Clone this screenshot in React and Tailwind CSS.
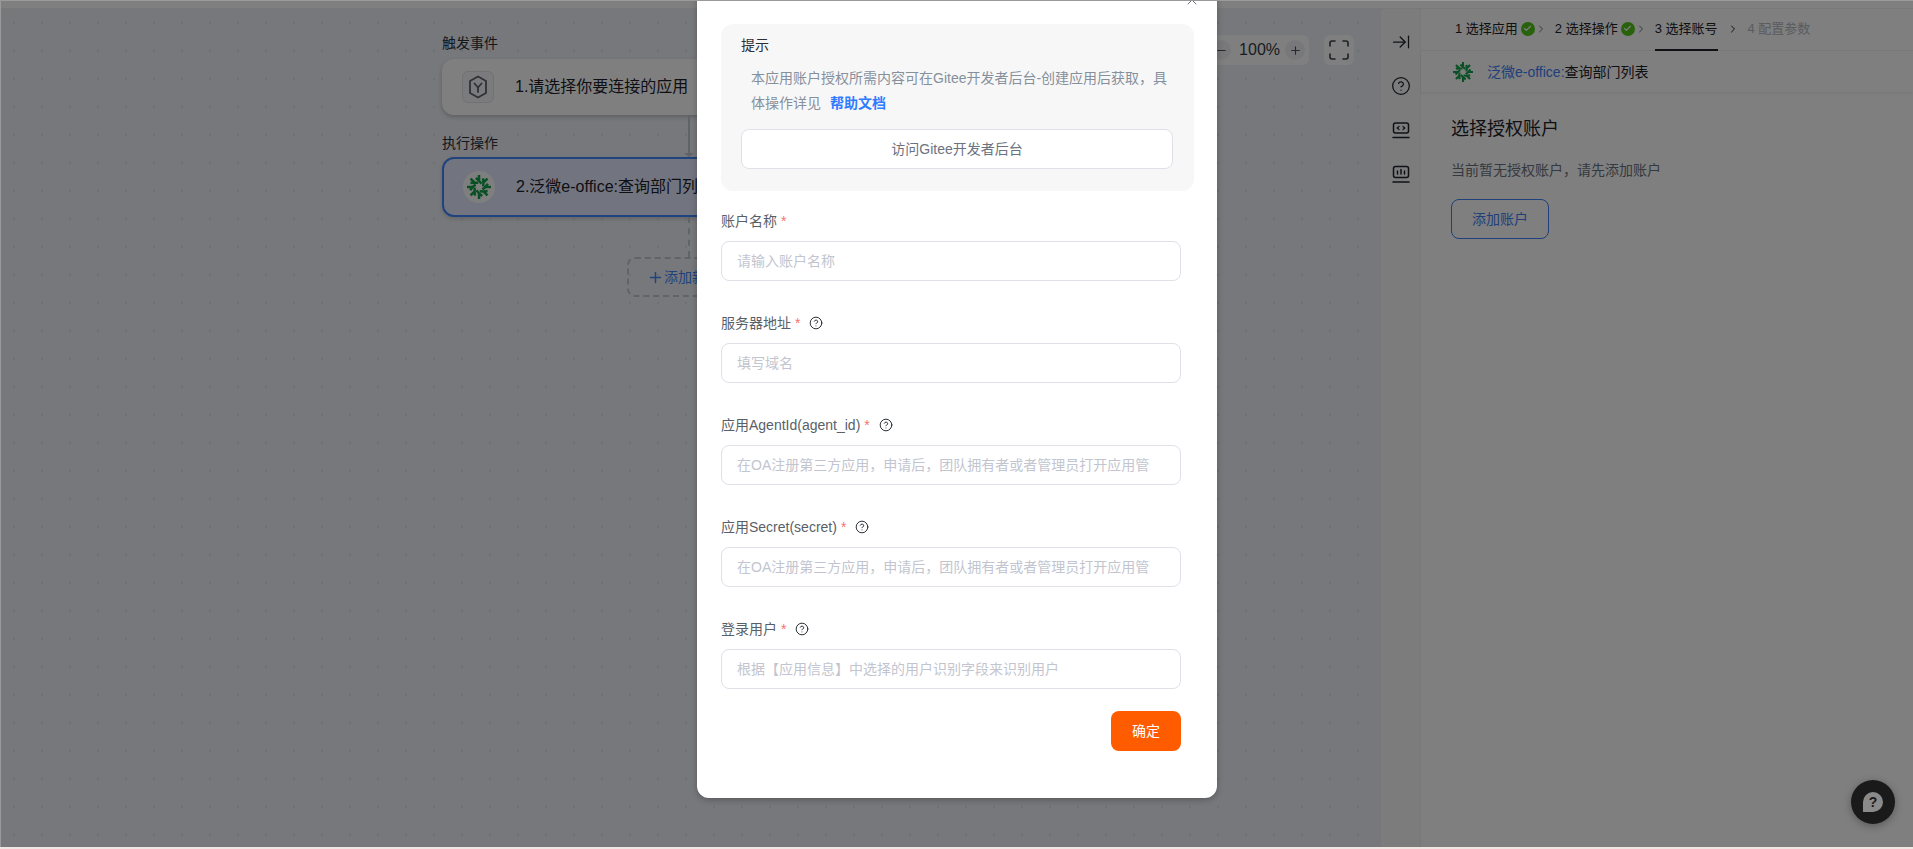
import React from "react";
import { ArrowRightToLine, CircleHelp, X, Plus, Minus, ChevronRight, Check } from "lucide-react";

const font = "font-['Liberation_Sans','Noto_Sans_CJK_SC',sans-serif]";

function Burst({ size = 24 }) {
  const arms = [0, 45, 90, 135, 180, 225, 270, 315];
  return (
    <svg width={size} height={size} viewBox="1.5 1.5 21 21" fill="none">
      {arms.map((a) => (
        <path key={a} transform={`rotate(${a} 12 12)`} d="M12 1.5 L12 6.5 L9.2 4.2 M12 6.5 L14.2 9" stroke="#14a04a" strokeWidth="2.2" strokeLinecap="butt" strokeLinejoin="miter" />
      ))}
    </svg>
  );
}

function HexIcon() {
  return (
    <svg width="20" height="24" viewBox="0 0 20 24" fill="none" stroke="#5c6270" strokeWidth="1.8" strokeLinejoin="round">
      <path d="M10 1.5 L18 6 V18 L10 22.5 L2 18 V6 Z" />
      <path d="M6.5 8.5 L10 12.5 L13.5 8.5 M10 12.5 V17" strokeLinecap="round" />
    </svg>
  );
}

function CodeIcon() {
  return (
    <svg width="18" height="20" viewBox="0 0 18 20" fill="none" stroke="#1f2329" strokeWidth="1.5" strokeLinecap="round">
      <rect x="1.5" y="3" width="15" height="10" rx="2" />
      <path d="M7 6.5 L5.2 8 L7 9.5 M11 6.5 L12.8 8 L11 9.5" strokeWidth="1.2" />
      <path d="M1 17.5 H17" />
    </svg>
  );
}

function ChartIcon() {
  return (
    <svg width="18" height="20" viewBox="0 0 18 20" fill="none" stroke="#1f2329" strokeWidth="1.5" strokeLinecap="round">
      <rect x="1.5" y="2.5" width="15" height="11" rx="2" />
      <path d="M5.5 7 V10 M9 5.5 V10 M12.5 7 V10" />
      <path d="M1 18 H17" />
    </svg>
  );
}

function FullscreenIcon() {
  return (
    <svg width="20" height="20" viewBox="0 0 20 20" fill="none" stroke="#3a3f4a" strokeWidth="1.6" strokeLinecap="round">
      <path d="M1 6 V3 Q1 1 3 1 H6 M14 1 H17 Q19 1 19 3 V6 M19 14 V17 Q19 19 17 19 H14 M6 19 H3 Q1 19 1 17 V14" />
    </svg>
  );
}

function StepCheck() {
  return (
    <span className="flex h-[14px] w-[14px] items-center justify-center rounded-full bg-[#52c41a]">
      <Check size={9} strokeWidth={3} color="#ffffff" />
    </span>
  );
}

function Field({ label, placeholder, help, first }) {
  return (
    <div className={first ? "mt-5" : "mt-8"}>
      <div className="flex h-5 items-center text-sm leading-5 text-[#595f69]">
        <span>{label}</span>
        <span className="ml-1 text-[#f87171]">*</span>
        {help && <CircleHelp size={14} strokeWidth={1.6} className="ml-[9px] text-[#1d2129]" />}
      </div>
      <div className="mt-2.5 flex h-10 w-[460px] items-center rounded-lg border border-[#dfe1e9] bg-white pl-[15px] pr-[30px]">
        <span className="overflow-hidden whitespace-nowrap text-sm leading-5 text-[#c2c5cf]">{placeholder}</span>
      </div>
    </div>
  );
}

export default function App() {
  return (
    <div className={`${font} h-[849px] w-full overflow-hidden bg-[#f0e6e2]`}>
      <div className="relative h-[847px] overflow-hidden border-t border-l border-[#9a9a9a]">
        <div className="flex h-full flex-col bg-white">
          <div className="h-2 shrink-0 border-b border-[#f0f0f0] bg-white" />
          <div className="flex min-h-0 flex-1">
            {/* canvas */}
            <div className="relative flex-1 bg-[#eef0f6] bg-[radial-gradient(circle,#dfe1e8_1px,transparent_1.5px)] bg-[length:28px_28px] bg-[position:-1px_0px]">
              <div className="ml-[441px] flex w-[494px] flex-col">
                <div className="mt-6 h-5 text-sm leading-5 text-[#2b2f36]">触发事件</div>
                <div className="mt-1.5 flex h-14 items-center rounded-xl bg-white pl-5 shadow-[0_2px_4px_rgba(0,0,0,0.22)]">
                  <span className="flex h-8 w-8 items-center justify-center rounded-md border border-[#dfe2ea] bg-[#f6f7fa]">
                    <HexIcon />
                  </span>
                  <span className="ml-[21px] text-base text-[#1d2129]">1.请选择你要连接的应用</span>
                </div>
                <div className="relative h-[42px]">
                  <div className="mt-[18px] h-5 text-sm leading-5 text-[#2b2f36]">执行操作</div>
                  <div className="absolute left-[246px] top-0 h-[38px] w-0.5 bg-[#c4c6cc]" />
                  <div className="absolute left-[242px] top-[38px] h-0 w-0 border-x-[5px] border-t-[4px] border-x-transparent border-t-[#c4c6cc]" />
                </div>
                <div className="flex h-[60px] items-center rounded-xl border-2 border-[#3f86ff] bg-[#e4ebff] pl-[19px] shadow-[0_2px_4px_rgba(0,0,0,0.15)]">
                  <span className="flex h-8 w-8 items-center justify-center rounded-full bg-white">
                    <Burst />
                  </span>
                  <span className="ml-[21px] whitespace-nowrap text-base text-[#1d2129]">2.泛微e-office:查询部门列表</span>
                </div>
                <div className="mx-auto h-10 w-0 border-l-2 border-dashed border-[#c4c6cc]" />
                <div className="mx-auto flex h-10 w-[124px] items-center justify-start whitespace-nowrap rounded-lg border-2 border-dashed border-[#c4c6cc] pl-[18px] text-sm text-[#3f86ff]">
                  <Plus size={17} strokeWidth={2} className="shrink-0" />
                  <span>添加新的步骤</span>
                </div>
              </div>
              <div className="absolute right-[26px] top-[26px] flex items-center gap-[15px]">
                <div className="flex h-[30px] items-center rounded-md bg-white px-1">
                  <span className="flex h-5 w-5 items-center justify-center rounded-full bg-[#f0f1f4] text-[#4b5563]"><Minus size={13} /></span>
                  <span className="ml-2 mr-[5px] text-base text-[#333a45]">100%</span>
                  <span className="flex h-5 w-5 items-center justify-center rounded-full bg-[#f0f1f4] text-[#4b5563]"><Plus size={13} /></span>
                </div>
                <div className="flex h-[30px] w-[30px] items-center justify-center rounded-md bg-white">
                  <FullscreenIcon />
                </div>
              </div>
            </div>
            {/* icon strip */}
            <div className="flex w-[41px] shrink-0 flex-col items-center gap-6 border-x border-[#f0f0f0] bg-[#f8f9fa] pt-[23px] text-[#1f2329]">
              <ArrowRightToLine size={20} strokeWidth={1.5} />
              <CircleHelp size={20} strokeWidth={1.5} />
              <CodeIcon />
              <ChartIcon />
            </div>
            {/* right panel */}
            <div className="flex w-[492px] shrink-0 flex-col bg-white">
              <div className="flex h-[42px] shrink-0 items-center border-b border-[#f0f0f0] pb-0.5 pl-[34px] text-[13px] text-[#1d2129]">
                <span>1 选择应用</span>
                <span className="ml-[3px]"><StepCheck /></span>
                <ChevronRight size={12} className="text-[#6b7280]" />
                <span className="ml-2">2 选择操作</span>
                <span className="ml-[3px]"><StepCheck /></span>
                <ChevronRight size={12} className="text-[#6b7280]" />
                <span className="relative ml-2">
                  3 选择账号
                  <span className="absolute inset-x-0 bottom-[-13px] h-0.5 bg-[#1d2129]" />
                </span>
                <ChevronRight size={12} className="ml-[9px] text-[#1d2129]" />
                <span className="ml-[9px] text-[#b4b8c0]">4 配置参数</span>
              </div>
              <div className="flex h-[41px] shrink-0 items-center pl-8 text-sm shadow-[0_2px_3px_rgba(0,0,0,0.06)]">
                <Burst size={20} />
                <span className="ml-[14px] text-[#3f80f5]">泛微e-office:</span>
                <span className="text-[#1d2129]">查询部门列表</span>
              </div>
              <div className="pl-[30px] pt-[25px]">
                <div className="text-lg leading-6 text-[#1d2129]">选择授权账户</div>
                <div className="mt-[19px] text-sm leading-5 text-[#6b7280]">当前暂无授权账户，请先添加账户</div>
                <div className="mt-[19px] flex h-10 w-[98px] items-center justify-center rounded-lg border border-[#3f80f5] text-sm text-[#3f80f5]">添加账户</div>
              </div>
            </div>
          </div>
        </div>

        {/* mask and modal */}
        <div className="absolute inset-0 flex items-end justify-center bg-black/50 pb-[49px]">
          <div className="relative w-[520px] shrink-0 rounded-xl bg-white px-6 pb-[47px] pt-[40px] shadow-[0_2px_6px_rgba(0,0,0,0.25)]">
            <X size={16} strokeWidth={1.5} className="absolute right-[17px] top-[8px] text-[#6b7280]" />
            <div className="w-[473px] rounded-xl bg-[#f7f7f8] pb-[22px] pl-5 pr-[21px] pt-[11px]">
              <div className="text-sm leading-5 text-[#2b2f36]">提示</div>
              <div className="mt-[11px] pl-[10px] text-sm leading-[25px] text-[#86909c]">
                本应用账户授权所需内容可在Gitee开发者后台-创建应用后获取，具体操作详见
                <span className="ml-[9px] font-bold text-[#2f7bff]">帮助文档</span>
              </div>
              <div className="mt-[13px] flex h-10 items-center justify-center rounded-lg border border-[#dfe1e9] bg-white text-sm text-[#6b7280]">访问Gitee开发者后台</div>
            </div>
            <Field first label="账户名称" placeholder="请输入账户名称" />
            <Field help label="服务器地址" placeholder="填写域名" />
            <Field help label="应用AgentId(agent_id)" placeholder="在OA注册第三方应用，申请后，团队拥有者或者管理员打开应用管理-应用信息查看" />
            <Field help label="应用Secret(secret)" placeholder="在OA注册第三方应用，申请后，团队拥有者或者管理员打开应用管理-应用信息查看" />
            <Field help label="登录用户" placeholder="根据【应用信息】中选择的用户识别字段来识别用户" />
            <div className="mt-[22px] flex w-[460px] justify-end">
              <div className="flex h-10 w-[70px] items-center justify-center rounded-lg bg-[#ff5c00] text-sm text-white">确定</div>
            </div>
          </div>
        </div>

        {/* help bubble */}
        <div className="absolute bottom-[23px] right-[18px] flex h-11 w-11 items-center justify-center rounded-full bg-[#1a1a1a] shadow-[0_2px_8px_rgba(0,0,0,0.3)]">
          <span className="flex h-5 w-5 items-center justify-center rounded-full rounded-bl-sm bg-[#8a8a8a] text-sm font-bold leading-none text-[#1a1a1a]">?</span>
        </div>
      </div>
    </div>
  );
}
